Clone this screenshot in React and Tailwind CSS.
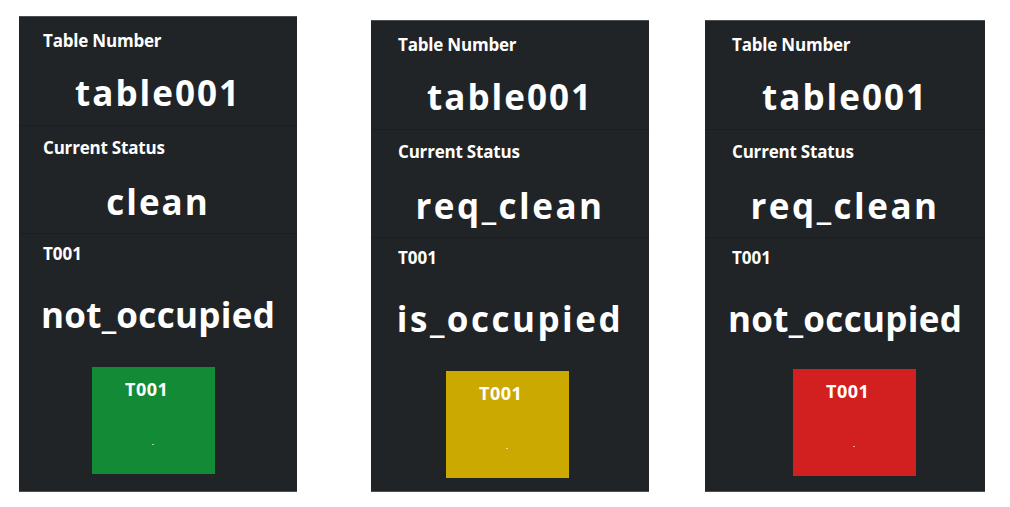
import React from "react";

const font = { fontFamily: "'Open Sans', Lato, sans-serif" };

function Panel({ status, statusTrack, occ, occTrack, boxClass, panelClass, boxWrap, padClass }) {
  return (
    <div className={`flex flex-col bg-[#212427] border-t border-b border-[#4b4e51] text-white ${panelClass}`} style={font}>
      <div className="h-[109px] border-b border-[#1b1d20] flex flex-col">
        <div className={`${padClass} pt-[14px] text-[17px] font-bold leading-[20px] tracking-[-0.2px]`}>Table Number</div>
        <div className="text-center text-[35px] font-bold leading-[40px] mt-[22px] tracking-[2px]">table001</div>
      </div>
      <div className="h-[108px] border-b border-[#1b1d20] flex flex-col">
        <div className={`${padClass} pt-[12px] text-[17px] font-bold leading-[20px] tracking-[-0.2px]`}>Current Status</div>
        <div className={`text-center text-[35px] font-bold leading-[40px] mt-[24px] ${statusTrack}`}>{status}</div>
      </div>
      <div className="flex flex-col">
        <div className={`${padClass} pt-[10px] text-[17px] font-bold leading-[20px]`}>T001</div>
        <div className={`text-center text-[35px] font-bold leading-[40px] mt-[31px] ${occTrack}`}>{occ}</div>
        <div className={`flex ${boxWrap}`}>
          <div className={`relative w-[123px] h-[107px] ${boxClass}`}>
            <div className="pl-[33px] pt-[12px] text-[18px] font-bold leading-[20px] tracking-[0.5px]">T001</div>
            <div className="absolute left-[60px] top-[77px] w-[2px] h-[1px] bg-white/60" />
          </div>
        </div>
      </div>
    </div>
  );
}

export default function App() {
  return (
    <div className="w-[1010px] h-[507px] bg-white flex items-start">
      <Panel
        status="clean"
        statusTrack="tracking-[2px]"
        occ="not_occupied"
        occTrack="tracking-[0.3px]"
        boxClass="bg-[#138a35]"
        panelClass="ml-[19px] mt-[16px] w-[278px] h-[476px]"
        boxWrap="ml-[73px] mt-[32px]"
        padClass="pl-[24px]"
      />
      <Panel
        status="req_clean"
        statusTrack="tracking-[2.5px]"
        occ="is_occupied"
        occTrack="tracking-[2.5px]"
        boxClass="bg-[#cca901]"
        panelClass="ml-[74px] mt-[20px] w-[278px] h-[472px]"
        boxWrap="ml-[75px] mt-[32px]"
        padClass="pl-[27px]"
      />
      <Panel
        status="req_clean"
        statusTrack="tracking-[2.5px]"
        occ="not_occupied"
        occTrack="tracking-[0.3px]"
        boxClass="bg-[#d21f1f]"
        panelClass="ml-[56px] mt-[20px] w-[280px] h-[472px]"
        boxWrap="ml-[88px] mt-[30px]"
        padClass="pl-[27px]"
      />
    </div>
  );
}
